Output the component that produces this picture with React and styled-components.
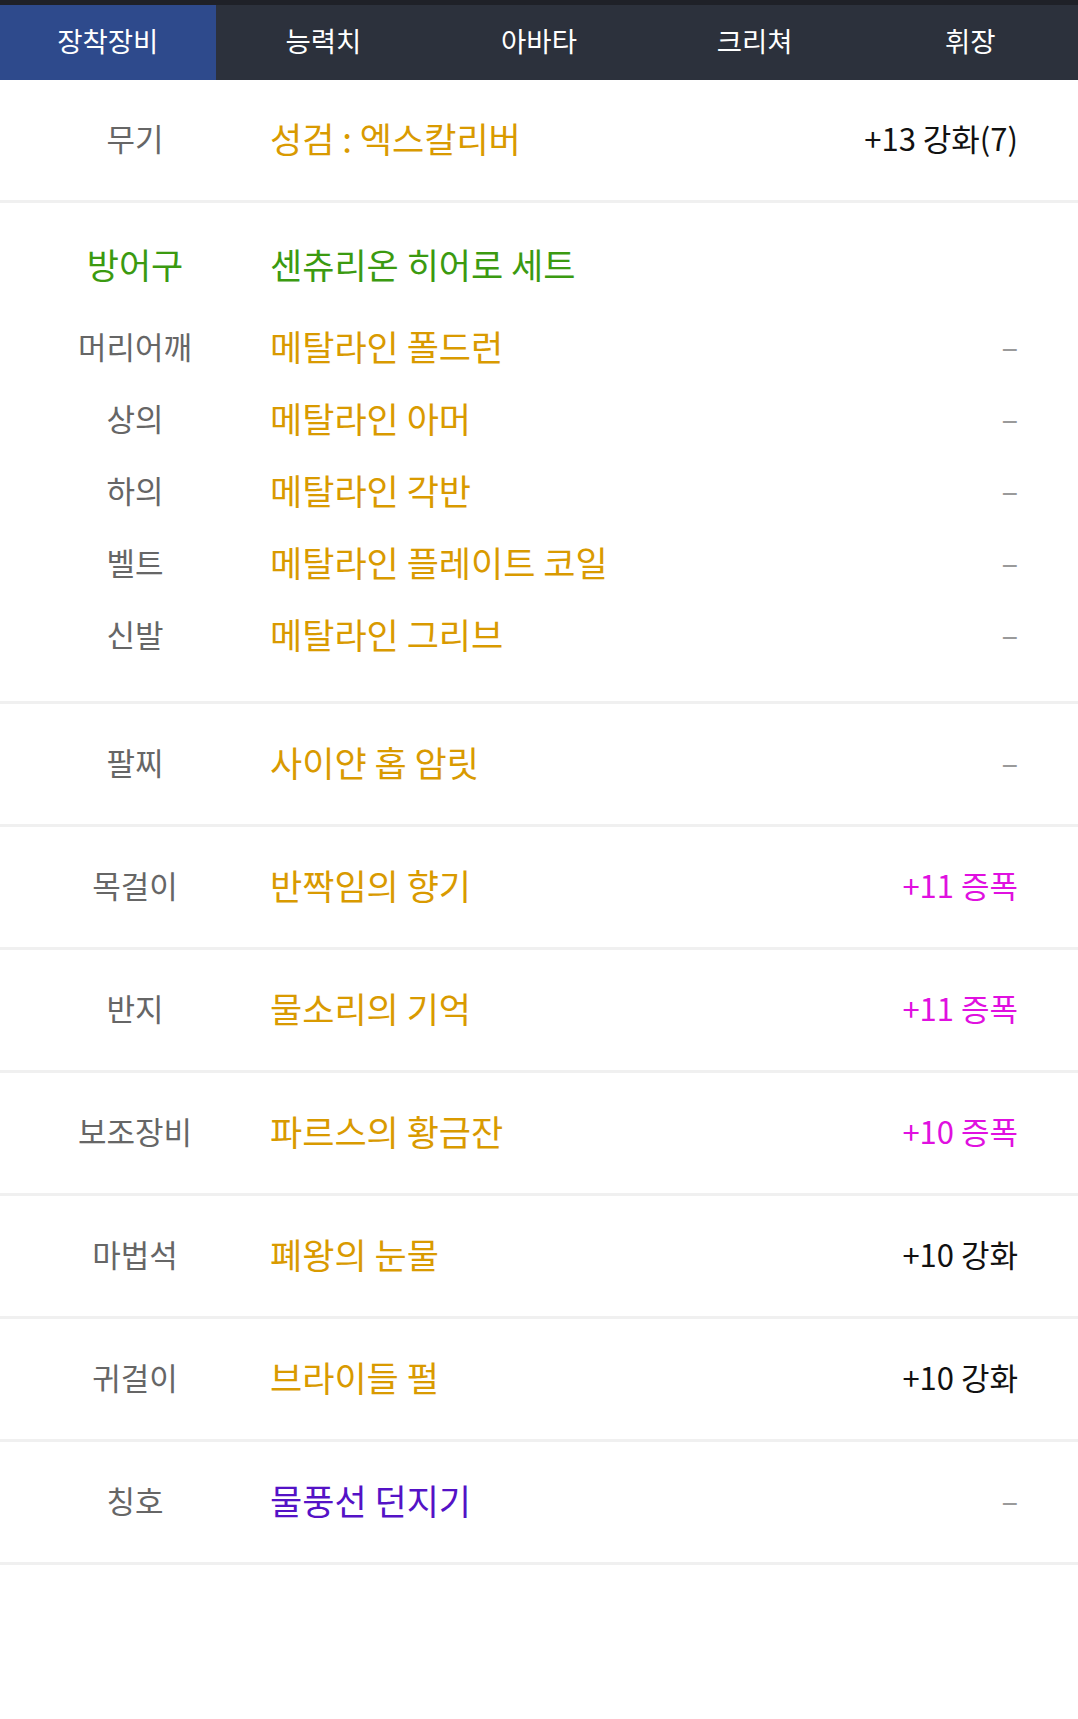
import styled, { createGlobalStyle } from "styled-components";

const GlobalStyle = createGlobalStyle`
  body {
    margin: 0;
    background: #ffffff;
    font-family: "Noto Sans CJK KR", "Noto Sans", sans-serif;
  }
`;

const colors = {
  label: "#666666",
  unique: "#d99a00",
  set: "#3b9a10",
  title: "#5412c6",
  amp: "#e010e0",
  dash: "#9a9a9a",
  line: "#f0f0f0",
};

// Composants
const Page = styled.div`
  width: 100%;
  min-height: 1719px;
  background: #ffffff;
`;

const TopStrip = styled.div`
  height: 5px;
  background: #1f2128;
`;

const Tabs = styled.nav`
  display: grid;
  grid-template-columns: repeat(5, 1fr);
  height: 75px;
  background: #2c313c;
`;

const Tab = styled.div`
  display: flex;
  align-items: center;
  justify-content: center;
  background: ${(p) => (p.$active ? "#2e4a8c" : "transparent")};
  color: #ffffff;
  font-size: 27.5px;
  padding-bottom: 6px;
`;

const Row = styled.div`
  display: flex;
  align-items: center;
  height: 114px;
  padding-bottom: 6px;
  border-bottom: 3px solid ${colors.line};
`;

const Section = styled.div`
  display: flex;
  flex-direction: column;
  padding: 24px 0 32px;
  border-bottom: 3px solid ${colors.line};
`;

const SubRow = styled.div`
  display: flex;
  align-items: center;
  height: 72px;
  margin-bottom: ${(p) => (p.$head ? "10px" : "0")};
`;

const Label = styled.div`
  width: 270px;
  flex-shrink: 0;
  text-align: center;
  color: ${(p) => p.$color || colors.label};
  font-size: ${(p) => (p.$head ? "35px" : "31px")};
  line-height: 1;
`;

const Name = styled.div`
  flex: 1;
  color: ${(p) => p.$color};
  font-size: 35px;
  line-height: 1;
`;

const Value = styled.div`
  padding-right: 60px;
  color: ${(p) => p.$color || "#111111"};
  font-size: 31px;
  line-height: 1;
`;

const armor = [
  ["머리어깨", "메탈라인 폴드런"],
  ["상의", "메탈라인 아머"],
  ["하의", "메탈라인 각반"],
  ["벨트", "메탈라인 플레이트 코일"],
  ["신발", "메탈라인 그리브"],
];

const items = [
  { label: "팔찌", name: "사이얀 홉 암릿", value: "–" },
  { label: "목걸이", name: "반짝임의 향기", value: "+11 증폭", amp: true },
  { label: "반지", name: "물소리의 기억", value: "+11 증폭", amp: true },
  { label: "보조장비", name: "파르스의 황금잔", value: "+10 증폭", amp: true },
  { label: "마법석", name: "폐왕의 눈물", value: "+10 강화" },
  { label: "귀걸이", name: "브라이들 펄", value: "+10 강화" },
  { label: "칭호", name: "물풍선 던지기", value: "–", color: colors.title },
];

const valueColor = (item) =>
  item.value === "–" ? colors.dash : item.amp ? colors.amp : undefined;

export default function App() {
  const tabs = ["장착장비", "능력치", "아바타", "크리쳐", "휘장"];

  return (
    <Page>
      <GlobalStyle />
      <TopStrip />
      <Tabs>
        {tabs.map((t, i) => (
          <Tab key={t} $active={i === 0}>
            {t}
          </Tab>
        ))}
      </Tabs>

      <Row>
        <Label>무기</Label>
        <Name $color={colors.unique}>성검 : 엑스칼리버</Name>
        <Value>+13 강화(7)</Value>
      </Row>

      <Section>
        <SubRow $head>
          <Label $head $color={colors.set}>
            방어구
          </Label>
          <Name $color={colors.set}>센츄리온 히어로 세트</Name>
        </SubRow>
        {armor.map(([label, name]) => (
          <SubRow key={label}>
            <Label>{label}</Label>
            <Name $color={colors.unique}>{name}</Name>
            <Value $color={colors.dash}>–</Value>
          </SubRow>
        ))}
      </Section>

      {items.map((item) => (
        <Row key={item.label}>
          <Label>{item.label}</Label>
          <Name $color={item.color || colors.unique}>{item.name}</Name>
          <Value $color={valueColor(item)}>{item.value}</Value>
        </Row>
      ))}
    </Page>
  );
}
